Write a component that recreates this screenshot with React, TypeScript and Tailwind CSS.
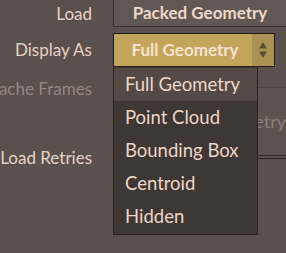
const font = { fontFamily: "Lato, 'Noto Sans', sans-serif" };

function Label({ children, faded = false }: { children: React.ReactNode; faded?: boolean }) {
  return (
    <div
      className={`flex h-[22px] w-[100px] shrink-0 items-center justify-end whitespace-nowrap pr-2 text-[17px] ${faded ? "text-[#948680]" : "text-[#e4d2c6]"}`}
    >
      {children}
    </div>
  );
}

const items = ["Full Geometry", "Point Cloud", "Bounding Box", "Centroid", "Hidden"];

export default function App() {
  return (
    <div className="relative h-[253px] w-[286px] overflow-hidden bg-[#5a504c]" style={font}>
      {/* Load */}
      <div className="flex h-[27px] items-center">
        <Label>Load</Label>
        <div className="ml-[13px] flex h-[27px] w-[180px] items-center justify-center border-b border-l border-[#3a332f] bg-[#625853] text-[17px] font-bold text-[#ecd8cc]">
          Packed Geometry
        </div>
      </div>

      {/* Display As */}
      <div className="mt-[6px] flex h-[34px] items-center">
        <Label>Display As</Label>
        <div className="ml-[13px] flex h-[34px] w-[162px] border border-[#1c1815] bg-[#c3a45b]">
          <div className="flex flex-1 items-center justify-center pl-1 text-[17px] font-bold text-[#f6e2d0]">
            Full Geometry
          </div>
          <div className="flex w-[22px] items-center justify-center bg-[#ab9152]">
            <svg width="10" height="20" viewBox="0 0 10 20">
              <path d="M5 2 L9 8.5 H1 Z" fill="#5e4d2c" />
              <path d="M5 18 L9 11.5 H1 Z" fill="#5e4d2c" />
            </svg>
          </div>
        </div>
      </div>

      {/* Cache Frames / Load Retries area */}
      <div className="flex">
        <div className="flex w-[113px] shrink-0 flex-col">
          <div className="mt-[11px]">
            <Label faded>Cache Frames</Label>
          </div>
          <div className="mt-[47px]">
            <Label>Load Retries</Label>
          </div>
        </div>
        <div className="flex flex-1 flex-col pt-[20px]">
          <div className="flex h-[68px] items-center justify-end overflow-hidden whitespace-nowrap border-t border-[#4f4642] bg-[#5c524e] text-[18px] text-[#8c7f78]">
            Full Geometry
          </div>
          <div className="h-[4px] border-y border-[#2c2623]" />
        </div>
      </div>

      {/* dropdown menu */}
      <div className="absolute left-[113px] top-[66px] w-[145px] border border-[#2a2421] bg-[#3f3733] py-px text-[18.5px] text-[#ead6ca]">
        {items.map((it, i) => (
          <div
            key={it}
            className={`flex h-[33px] items-center pl-[11px] ${i === 0 ? "bg-[#544a45]" : ""}`}
          >
            {it}
          </div>
        ))}
      </div>
    </div>
  );
}
